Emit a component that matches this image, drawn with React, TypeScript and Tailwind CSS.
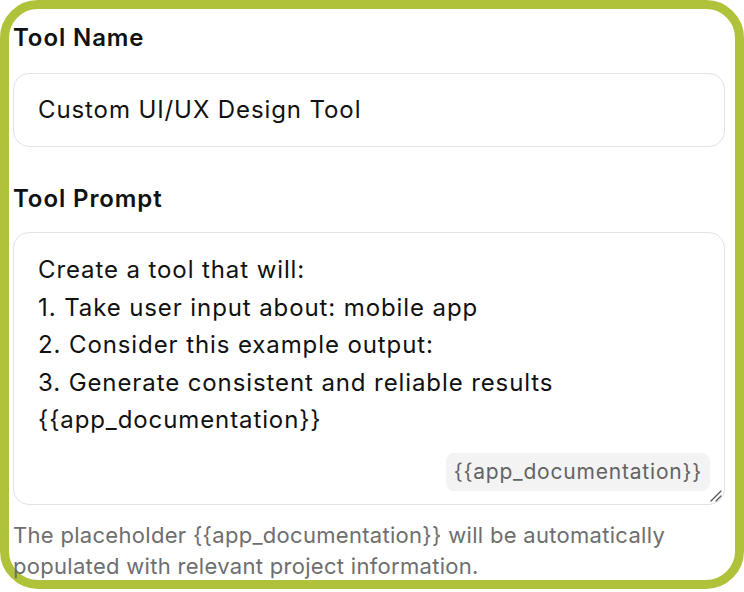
export default function App() {
  return (
    <div className="w-[744px] h-[592px] bg-white font-['Inter',sans-serif] text-[#111]">
      <div className="h-[589px] rounded-[38px] border-[9px] border-[#b0c23a] pl-[4px] pr-[10px] pt-[13px]">
        <Label text="Tool Name" />
        <div className="mt-[19px] h-[74px] rounded-[16px] border border-[#e3e3e3] flex items-center px-[24px] text-[24px] tracking-[0.9px]">
          Custom UI/UX Design Tool
        </div>
        <div className="mt-[36px]">
          <Label text="Tool Prompt" />
        </div>
        <PromptBox />
        <p className="mt-[15px] text-[22px] leading-[31px] tracking-[0.3px] text-[#6e6e6e]">
          The placeholder {"{{app_documentation}}"} will be automatically
          <br />
          populated with relevant project information.
        </p>
      </div>
    </div>
  );
}

function Label({ text }: { text: string }) {
  return <div className="text-[24px] leading-[32px] font-semibold tracking-[0.9px]">{text}</div>;
}

function PromptBox() {
  const lines = [
    "Create a tool that will:",
    "1. Take user input about: mobile app",
    "2. Consider this example output:",
    "3. Generate consistent and reliable results",
    "{{app_documentation}}",
  ];
  return (
    <div className="relative mt-[17px] h-[273px] rounded-[16px] border border-[#e3e3e3] px-[24px] pt-[18px]">
      <div className="text-[24px] leading-[37.5px] tracking-[0.9px]">
        {lines.map((l) => (
          <div key={l}>{l}</div>
        ))}
      </div>
      <span className="absolute right-[14px] bottom-[13px] h-[38px] flex items-center rounded-[8px] bg-[#f3f3f3] px-[8px] text-[21px] tracking-[0.8px] text-[#636363]">
        {"{{app_documentation}}"}
      </span>
      <svg className="absolute right-[2px] bottom-[2px]" width="14" height="14" viewBox="0 0 14 14">
        <path d="M3 13 L13 3 M8 13 L13 8" stroke="#555" strokeWidth="1.3" strokeLinecap="round" />
      </svg>
    </div>
  );
}
